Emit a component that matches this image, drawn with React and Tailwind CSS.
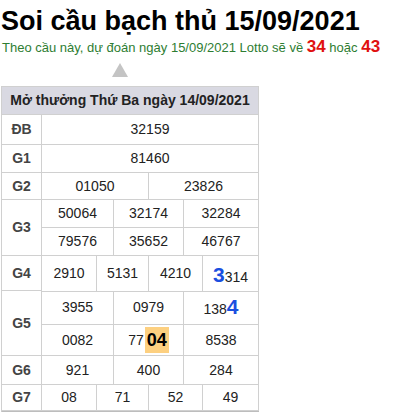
import React from 'react';

const font = { fontFamily: '"Liberation Sans", Arial, sans-serif' };

function Cell({ children, className = '' }) {
  return (
    <div className={`flex items-center justify-center border-r border-b border-[#d0d0d0] text-[14px] text-[#222] ${className}`}>
      {children}
    </div>
  );
}

function Label({ children }) {
  return (
    <div className="w-[40px] shrink-0 flex items-center justify-center border-r border-b border-[#d0d0d0] font-bold text-[14px] text-[#444]">
      {children}
    </div>
  );
}

export default function App() {
  return (
    <div className="bg-white w-[396px] h-[412px] overflow-hidden" style={font}>
      <h1 className="pl-[1px] pt-[5px] text-[27px] leading-[32px] font-bold text-black">
        Soi cầu bạch thủ 15/09/2021
      </h1>
      <p className="pl-[2px] mt-[2px] text-[13px] leading-[16px] text-[#2e7d32]">
        Theo cầu này, dự đoán ngày 15/09/2021 Lotto sẽ về{' '}
        <span className="text-[17px] font-bold text-[#e01010]">34</span> hoặc{' '}
        <span className="text-[17px] font-bold text-[#e01010]">43</span>
      </p>
      <div className="ml-[112px] mt-[7px] w-0 h-0 border-l-[8px] border-r-[8px] border-b-[14px] border-l-transparent border-r-transparent border-b-[#c4c4c4]" />

      <div className="ml-[1px] mt-[9px] w-[258px] border-l border-t border-[#d0d0d0] border-b-2 border-b-[#bdbdbd]">
        <div className="h-[28px] flex items-center justify-center bg-[#d9d9e2] border-r border-b border-[#d0d0d0] font-bold text-[14px] text-[#222]">
          Mở thưởng Thứ Ba ngày 14/09/2021
        </div>

        <div className="flex h-[30px]">
          <Label>ĐB</Label>
          <Cell className="flex-1">32159</Cell>
        </div>
        <div className="flex h-[28px]">
          <Label>G1</Label>
          <Cell className="flex-1">81460</Cell>
        </div>
        <div className="flex h-[27px]">
          <Label>G2</Label>
          <div className="flex-1 grid grid-cols-[107px_1fr]">
            <Cell>01050</Cell>
            <Cell>23826</Cell>
          </div>
        </div>
        <div className="flex h-[56px]">
          <Label>G3</Label>
          <div className="flex-1 grid grid-cols-[72px_70px_1fr] grid-rows-2">
            <Cell>50064</Cell>
            <Cell>32174</Cell>
            <Cell>32284</Cell>
            <Cell>79576</Cell>
            <Cell>35652</Cell>
            <Cell>46767</Cell>
          </div>
        </div>
        <div className="flex h-[35px]">
          <Label>G4</Label>
          <div className="flex-1 grid grid-cols-[55px_52px_54px_1fr]">
            <Cell>2910</Cell>
            <Cell>5131</Cell>
            <Cell>4210</Cell>
            <Cell>
              <span className="pt-[3px]">
                <span className="text-[21px] font-bold text-[#1a4fe0]">3</span>314
              </span>
            </Cell>
          </div>
        </div>
        <div className="flex h-[65px]">
          <Label>G5</Label>
          <div className="flex-1 grid grid-cols-[72px_70px_1fr] grid-rows-[34px_1fr]">
            <Cell>3955</Cell>
            <Cell>0979</Cell>
            <Cell>
              <span className="pb-[2px]">
                138<span className="text-[21px] font-bold text-[#1a4fe0]">4</span>
              </span>
            </Cell>
            <Cell>0082</Cell>
            <Cell>
              <span className="pr-[1px]">77</span>
              <span className="bg-[#fdd080] px-[2px] py-[3px] text-[18px] font-bold text-black leading-[20px]">04</span>
            </Cell>
            <Cell>8538</Cell>
          </div>
        </div>
        <div className="flex h-[29px]">
          <Label>G6</Label>
          <div className="flex-1 grid grid-cols-[72px_70px_1fr]">
            <Cell>921</Cell>
            <Cell>400</Cell>
            <Cell>284</Cell>
          </div>
        </div>
        <div className="flex h-[26px]">
          <Label>G7</Label>
          <div className="flex-1 grid grid-cols-[55px_52px_54px_1fr]">
            <Cell>08</Cell>
            <Cell>71</Cell>
            <Cell>52</Cell>
            <Cell>49</Cell>
          </div>
        </div>
      </div>
    </div>
  );
}
